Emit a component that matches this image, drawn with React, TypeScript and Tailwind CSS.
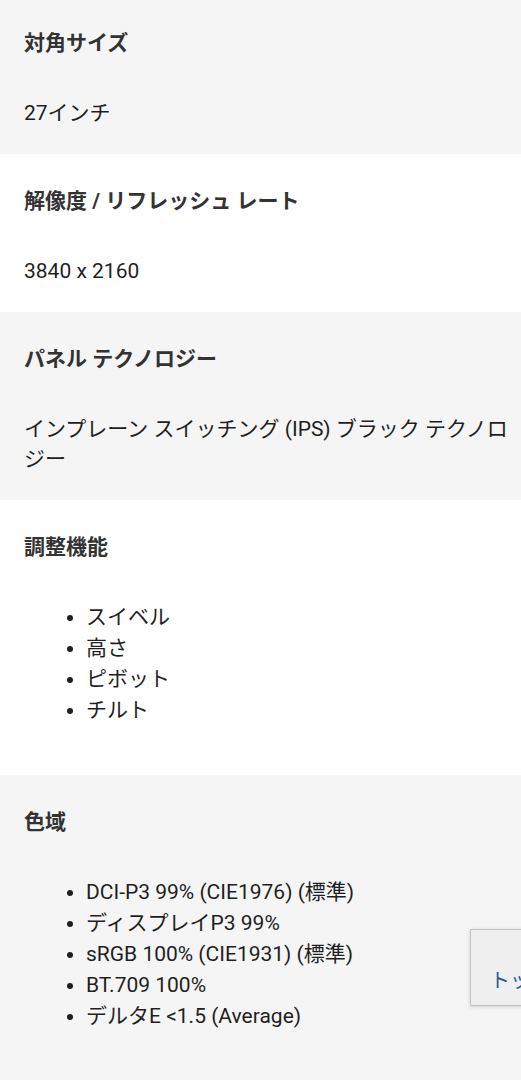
import React from 'react'

type Spec = {
  label: string
  value?: string
  items?: string[]
  gray: boolean
}

const specs: Spec[] = [
  { label: '対角サイズ', value: '27インチ', gray: true },
  { label: '解像度 / リフレッシュ レート', value: '3840 x 2160', gray: false },
  {
    label: 'パネル テクノロジー',
    value: 'インプレーン スイッチング (IPS) ブラック テクノロジー',
    gray: true,
  },
  { label: '調整機能', items: ['スイベル', '高さ', 'ピボット', 'チルト'], gray: false },
  {
    label: '色域',
    items: [
      'DCI-P3 99% (CIE1976) (標準)',
      'ディスプレイP3 99%',
      'sRGB 100% (CIE1931) (標準)',
      'BT.709 100%',
      'デルタE <1.5 (Average)',
    ],
    gray: true,
  },
]

function SpecRow({ spec, first }: { spec: Spec; first: boolean }) {
  return (
    <section
      className={`${spec.gray ? 'bg-[#f5f5f5]' : 'bg-white'} ${first ? 'pt-[28px]' : 'pt-[32px]'} pb-[26px] pl-6 pr-[4px]`}
    >
      <h3 className="text-[21px] leading-[30px] font-bold text-[#333333]">{spec.label}</h3>
      {spec.value && (
        <p className="mt-[40px] text-[21px] leading-[30px] text-[#1f1f1f]">{spec.value}</p>
      )}
      {spec.items && (
        <ul className="mt-[40px] mb-[23px] list-disc pl-[62px] text-[21px] leading-[31px] text-[#1f1f1f]">
          {spec.items.map((item) => (
            <li key={item}>{item}</li>
          ))}
        </ul>
      )}
    </section>
  )
}

export default function App() {
  return (
    <div
      className="relative h-[1080px] w-[521px] overflow-hidden bg-[#f5f5f5]"
      style={{ fontFamily: "Roboto, 'Noto Sans CJK JP', sans-serif" }}
    >
      {specs.map((spec, i) => (
        <SpecRow key={spec.label} spec={spec} first={i === 0} />
      ))}

      {/* floating "back to top" tab, cut off at the right edge */}
      <button
        type="button"
        className="absolute top-[929px] left-[470px] h-[77px] w-[120px] border border-[#c2c2c2] bg-[#efefef] pt-[27px] pl-[19px] text-left text-[20px] leading-[24px] whitespace-nowrap text-[#2d5a8c] shadow-[0_1px_4px_rgba(0,0,0,0.15)]"
      >
        トップへ
      </button>
    </div>
  )
}
